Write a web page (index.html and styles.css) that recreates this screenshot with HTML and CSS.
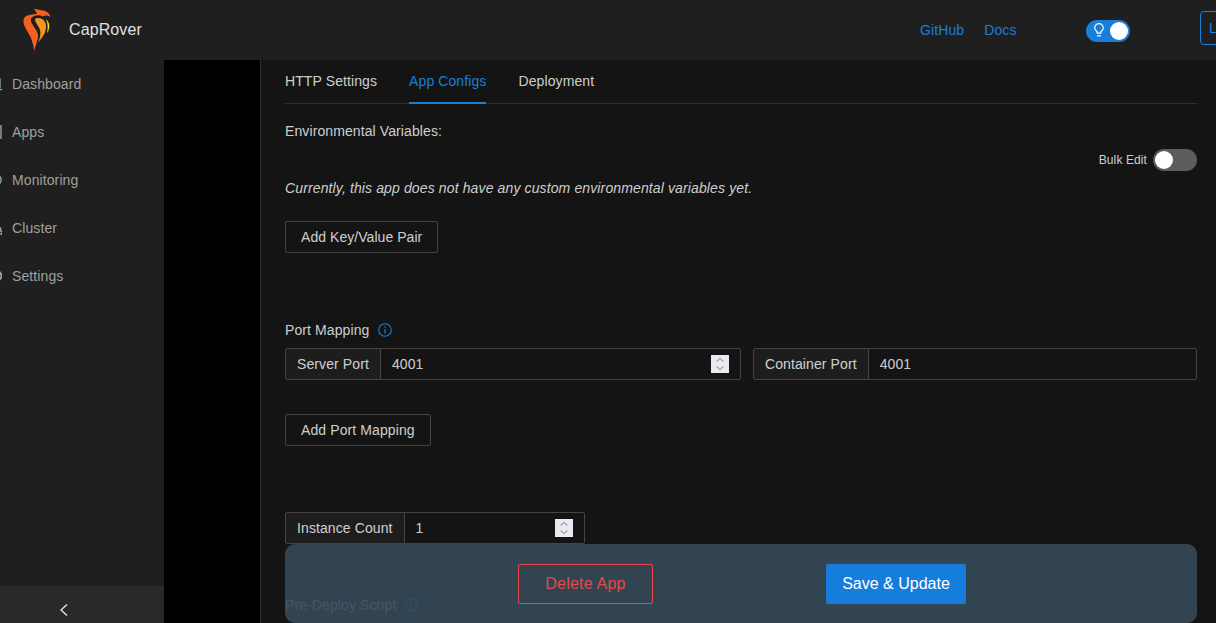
FILE: index.html
```html
<!DOCTYPE html>
<html lang="en">
<head>
<meta charset="utf-8">
<title>CapRover</title>
<link rel="stylesheet" href="styles.css">
</head>
<body>
<div class="app">
  <header class="topbar">
    <div class="brand">
      <svg class="logo" viewBox="0 0 30 44" width="30" height="44" aria-hidden="true">
        <path fill="#f26322" d="M12 1C17 2 22 2 25 4C27 5 28 7 28.500 9C26 7 23 7 21 8.500C16 6 11 7.500 9 10.500C8 14 11 17 13.500 21C16 25 17 29 15 33C14.500 36 13 40 12 43C12 40 11 36 10 33C9 28 5 24 3 19C1 15 1 11 3 9C6 6 11 7 15 5.500C14 4 13 2 12 1Z"/>
        <path fill="#f7941d" d="M13 10.500C17 9 21 10.500 23 14C25 18 24 24 21 28C19 31 17 33 16 35C18 30 19 26 18 22C17 18 13 15 13 10.500Z"/>
        <path fill="#ffe500" d="M24 11C26 13 28 16 27 20C26.500 23 26 24 25 25C26 21 26 15 24 11Z"/>
      </svg>
      <span class="brand-name">CapRover</span>
    </div>
    <nav class="top-links">
      <a class="top-link" href="#">GitHub</a>
      <a class="top-link" href="#">Docs</a>
    </nav>
    <div class="theme-switch">
      <svg class="bulb" viewBox="0.800 0.800 10.400 14.400" width="10" height="13.500" aria-hidden="true">
        <path fill="none" stroke="#fff" stroke-width="1.300" d="M4 11.500V10C2.500 9 1.500 7.700 1.500 6C1.500 3.500 3.500 1.500 6 1.500S10.500 3.500 10.500 6C10.500 7.700 9.500 9 8 10V11.500ZM4 14.500H8"/>
      </svg>
      <span class="knob"></span>
    </div>
    <button class="logout" type="button">Logout</button>
  </header>
  <div class="body-row">
    <aside class="sidebar">
      <ul class="menu">
        <li class="menu-item">
          <svg class="menu-icon" viewBox="0 0 14 14" aria-hidden="true"><path d="M2 2H12V10H2ZM0 12.500H14" fill="none" stroke="currentColor" stroke-width="1.400"/></svg>
          <span>Dashboard</span>
        </li>
        <li class="menu-item">
          <svg class="menu-icon" viewBox="0 0 14 14" aria-hidden="true"><path d="M1 1H13V13H1Z" fill="none" stroke="currentColor" stroke-width="1.400"/></svg>
          <span>Apps</span>
        </li>
        <li class="menu-item">
          <svg class="menu-icon" viewBox="0 0 14 14" aria-hidden="true"><path d="M1 7A6 6 0 0 1 13 7A6 6 0 0 1 1 7Z" fill="none" stroke="currentColor" stroke-width="1.400"/></svg>
          <span>Monitoring</span>
        </li>
        <li class="menu-item">
          <svg class="menu-icon" viewBox="0 0 14 14" aria-hidden="true"><path d="M5 1H9V4H5ZM11 10H14V13H11ZM7 4V7H12.500V10" fill="none" stroke="currentColor" stroke-width="1.400"/></svg>
          <span>Cluster</span>
        </li>
        <li class="menu-item">
          <svg class="menu-icon" viewBox="0 0 14 14" aria-hidden="true"><path d="M11 2L13.500 5L13 9L11 12M11.500 5.500H14M11.500 8.500H14" fill="none" stroke="currentColor" stroke-width="1.400"/></svg>
          <span>Settings</span>
        </li>
      </ul>
      <div class="collapse-trigger">
        <svg viewBox="0 0 10 14" width="10" height="14" aria-hidden="true"><path d="M8 1.500L2 7L8 12.500" fill="none" stroke="#e8e8e8" stroke-width="1.300"/></svg>
      </div>
    </aside>
    <div class="gutter"></div>
    <main class="content">
      <div class="tabs">
        <span class="tab">HTTP Settings</span>
        <span class="tab tab-active">App Configs</span>
        <span class="tab">Deployment</span>
      </div>
      <p class="label env-label">Environmental Variables:</p>
      <div class="bulk-row">
        <span class="bulk-label">Bulk Edit</span>
        <span class="switch-off"><span class="knob"></span></span>
      </div>
      <p class="empty-note">Currently, this app does not have any custom environmental variables yet.</p>
      <button class="btn add-env" type="button">Add Key/Value Pair</button>

      <div class="label port-label">Port Mapping
        <svg class="info" viewBox="0 0 14 14" width="14" height="14" aria-hidden="true"><circle cx="7" cy="7" r="6.300" fill="none" stroke="#1b7ed9" stroke-width="1.100"/><path d="M7 6V10.500M7 3.500V4.800" stroke="#1b7ed9" stroke-width="1.200"/></svg>
      </div>
      <div class="port-row">
        <div class="field field-server">
          <span class="addon">Server Port</span>
          <input class="field-input" type="text" value="4001">
          <span class="spinner"><svg viewBox="0 0 18 18" width="18" height="18" aria-hidden="true"><path d="M5.500 6.500L9 3.500L12.500 6.500M5.500 11.500L9 14.500L12.500 11.500" fill="none" stroke="#a5a5ad" stroke-width="1.300"/></svg></span>
        </div>
        <div class="field field-container">
          <span class="addon">Container Port</span>
          <input class="field-input" type="text" value="4001">
        </div>
      </div>
      <button class="btn add-port" type="button">Add Port Mapping</button>
      <div class="field field-instance">
        <span class="addon">Instance Count</span>
        <input class="field-input" type="text" value="1">
        <span class="spinner"><svg viewBox="0 0 18 18" width="18" height="18" aria-hidden="true"><path d="M5.500 6.500L9 3.500L12.500 6.500M5.500 11.500L9 14.500L12.500 11.500" fill="none" stroke="#a5a5ad" stroke-width="1.300"/></svg></span>
      </div>
      <div class="label predeploy-label">Pre-Deploy Script
        <svg class="info" viewBox="0 0 14 14" width="14" height="14" aria-hidden="true"><circle cx="7" cy="7" r="6.300" fill="none" stroke="#1b7ed9" stroke-width="1.100"/><path d="M7 6V10.500M7 3.500V4.800" stroke="#1b7ed9" stroke-width="1.200"/></svg>
      </div>
      <div class="action-bar">
        <button class="action action-danger" type="button">Delete App</button>
        <button class="action action-primary" type="button">Save &amp; Update</button>
      </div>
    </main>
  </div>
</div>
</body>
</html>
```
FILE: styles.css
```css
* { box-sizing: border-box; }
html, body { margin: 0; height: 100%; overflow: hidden; background: #000; }
body { font-family: "Liberation Sans", Arial, sans-serif; font-size: 14px; color: rgba(255,255,255,.8); letter-spacing: .1px; }
button, input { letter-spacing: .1px; }
.app { height: 100vh; display: flex; flex-direction: column; overflow: hidden; }

.topbar { flex: 0 0 60px; height: 60px; background: #1f1f1f; display: flex; align-items: center; overflow: hidden; }
.brand { display: flex; align-items: center; width: 920px; padding-left: 22px; flex: none; }
.logo { flex: none; display: block; }
.brand-name { margin-left: 17px; font-size: 16px; color: #e0e0e0; }
.top-links { display: flex; gap: 20px; flex: none; width: 166px; }
.top-link { color: #1b7ed9; text-decoration: none; font-size: 14px; }
.theme-switch { flex: none; width: 44px; height: 22px; border-radius: 11px; background: #1b7ed9; display: flex; align-items: center; justify-content: space-between; padding: 0 2px 0 8px; margin-top: 2px; }
.bulb { display: block; margin-top: -2px; }
.knob { display: block; width: 18px; height: 18px; border-radius: 50%; background: #fff; }
.logout { flex: none; margin-left: 70px; width: 90px; height: 34px; border: 1px solid #1b7ed9; border-radius: 4px; background: transparent; color: #1b7ed9; font: 14px "Liberation Sans", Arial, sans-serif; text-align: left; padding: 0 8px; margin-top: -4px; }

.body-row { flex: 1; min-height: 0; display: flex; }
.sidebar { flex: 0 0 164px; background: #1f1f1f; display: flex; flex-direction: column; overflow: hidden; }
.menu { list-style: none; margin: 0; padding: 0; flex: 1; }
.menu-item { height: 48px; display: flex; align-items: center; gap: 10px; margin-left: -12px; color: #a0a0a0; }
.menu-icon { width: 14px; height: 14px; flex: none; display: block; }
.collapse-trigger { flex: 0 0 37px; background: #292929; display: flex; justify-content: center; align-items: flex-end; padding: 0 37px 6px 0; }
.gutter { flex: 0 0 96px; background: #000; }

.content { flex: 1; min-width: 0; position: relative; background: #141414; border-left: 1px solid #303030; padding: 0 19px 0 24px; overflow: hidden; }
.tabs { display: flex; gap: 32px; height: 44px; border-bottom: 1px solid #303030; }
.tab { height: 44px; line-height: 43px; }
.tab-active { color: #1b7ed9; border-bottom: 2px solid #1b7ed9; }
.label { margin: 0; line-height: 20px; }
.env-label { margin-top: 17px; }
.bulk-row { display: flex; justify-content: flex-end; align-items: center; gap: 6px; margin-top: 8px; height: 22px; }
.bulk-label { font-size: 12px; }
.switch-off { width: 44px; height: 22px; border-radius: 11px; background: #5c5c5c; padding: 2px; display: block; }
.empty-note { margin: 7px 0 0; line-height: 20px; font-style: italic; letter-spacing: .125px; }
.btn { display: block; height: 32px; padding: 0 15px; background: transparent; border: 1px solid #434343; border-radius: 2px; color: rgba(255,255,255,.8); font: 14px "Liberation Sans", Arial, sans-serif; }
.add-env { margin-top: 23px; letter-spacing: .05px; }
.port-label { margin-top: 67px; display: flex; align-items: center; gap: 9px; }
.port-row { display: flex; gap: 12px; margin-top: 8px; }
.field { display: flex; align-items: center; height: 32px; border: 1px solid #434343; border-radius: 2px; }
.field-server { flex: 0 0 456px; }
.field-container { flex: 1 1 0; min-width: 0; }
.field-instance { width: 300px; margin-top: 66px; }
.addon { flex: none; align-self: stretch; padding: 0 11px; line-height: 30px; background: #1d1d1d; border-right: 1px solid #434343; }
.field-input { flex: 1; min-width: 0; align-self: stretch; border: 0; outline: 0; background: transparent; color: rgba(255,255,255,.8); font: 14px "Liberation Sans", Arial, sans-serif; padding: 0 11px; }
.spinner { flex: none; display: block; width: 18px; height: 18px; margin-right: 11px; background: #e9e9ef; }
.spinner svg { display: block; }
.add-port { margin-top: 34px; }
.predeploy-label { margin-top: 51px; display: flex; align-items: center; gap: 8px; }
.action-bar { position: absolute; left: 24px; right: 19px; top: 484px; height: 79px; background: rgba(53,73,89,.9); border-radius: 10px; display: flex; justify-content: center; align-items: flex-start; gap: 173px; padding: 20px 0 0 2px; }
.action { height: 40px; padding: 0 15px; border-radius: 2px; font: 16px "Liberation Sans", Arial, sans-serif; }
.action-danger { width: 135px; background: transparent; border: 1px solid #e84749; color: #e84749; letter-spacing: .2px; }
.action-primary { width: 140px; background: #177ddc; border: 1px solid #177ddc; color: #fff; letter-spacing: 0; }
```
